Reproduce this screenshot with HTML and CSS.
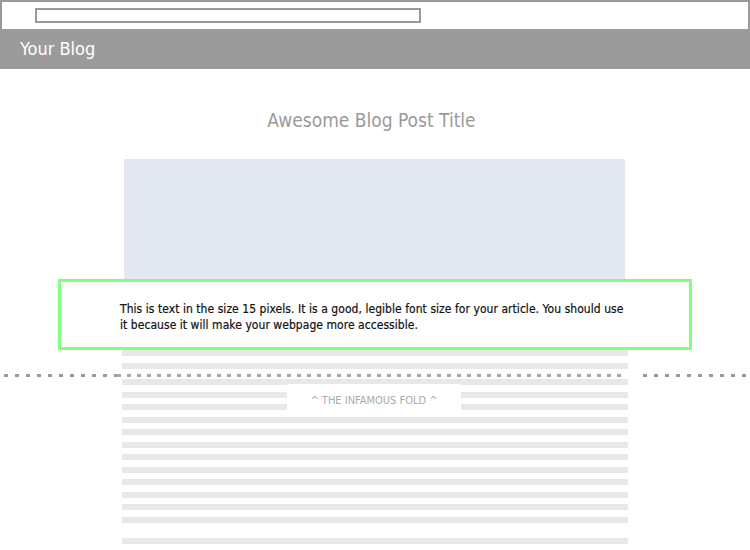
FILE: index.html
```html
<!DOCTYPE html>
<html>
<head>
<meta charset="utf-8">
<link rel="stylesheet" href="styles.css">
</head>
<body>
<div class="page">
  <div class="chrome"><div class="address"></div></div>
  <header class="site-header">Your Blog</header>
  <main class="post">
    <h1 class="post-title">Awesome Blog Post Title</h1>
    <div class="hero"></div>
    <div class="lines">
      <div class="line"></div>
      <div class="line"></div>
    </div>
    <div class="lines lines-b">
      <div class="line"></div><div class="line"></div><div class="line"></div><div class="line"></div>
      <div class="line"></div><div class="line"></div><div class="line"></div><div class="line"></div>
      <div class="line"></div><div class="line"></div><div class="line"></div><div class="line"></div>
    </div>
    <div class="lines lines-c">
      <div class="line"></div>
    </div>
  </main>
  <div class="sample">
    <p>This is text in the size 15 pixels. It is a good, legible font size for your article. You should use it because it will make your webpage more accessible.</p>
  </div>
  <div class="fold">
    <div class="dash dash-left"></div>
    <div class="dash dash-mid"></div>
    <div class="dash dash-right"></div>
  </div>
  <div class="fold-label">^ THE INFAMOUS FOLD ^</div>
</div>
</body>
</html>
```
FILE: styles.css
```css
* { box-sizing: border-box; }
html, body { margin: 0; padding: 0; background: #fff; }
body { font-family: "DejaVu Sans Condensed", "DejaVu Sans", sans-serif; }
.page { position: relative; width: 750px; height: 550px; overflow: hidden; }
.chrome {
  height: 29px;
  border: 2px solid #9a9a9a;
  border-bottom: 0;
  padding: 6px 0 0 33px;
}
.address { width: 386px; height: 15px; border: 2px solid #9a9a9a; }
.site-header {
  height: 40px;
  background: #9b9b9b;
  color: #fff;
  font-size: 18px;
  line-height: 40px;
  padding-left: 20px;
}
.post { padding-top: 37px; }
.post-title {
  margin: 0;
  text-align: center;
  font-weight: normal;
  font-size: 19px;
  line-height: 28px;
  color: #9a9a9a;
  padding-right: 7px;
}
.hero { margin: 25px 0 0 124px; width: 501px; height: 180px; background: #e3e7ef; }
.lines { margin-left: 122px; width: 506px; display: flex; flex-direction: column; }
.hero + .lines { margin-top: 11px; gap: 7px; }
.lines-b { margin-top: 10px; gap: 6.5px; }
.lines-c { margin-top: 15.5px; }
.line { height: 6px; background: #e8e8e8; flex: none; }
.sample {
  position: absolute;
  left: 58px; top: 279px;
  width: 634px; height: 71px;
  border: 3px solid #80ff80;
  background: #fff;
  padding: 19px 0 0 59px;
}
.sample p {
  margin: 0;
  font-size: 12px;
  line-height: 16px;
  color: #111;
  letter-spacing: 0.05px;
  width: 506px;
  -webkit-text-stroke: 0.2px #111;
}
.fold {
  position: absolute;
  left: 0; top: 374px;
  width: 750px; height: 3px;
  display: flex;
}
.dash { height: 3px; }
.dash-left {
  margin-left: 4px; width: 114px;
  background: repeating-linear-gradient(90deg, #999 0 4px, transparent 4px 11px);
}
.dash-mid {
  width: 507px;
  background: repeating-linear-gradient(90deg, #a8a8a8 0 4px, transparent 4px 10px);
}
.dash-right {
  margin-left: 21px; width: 108px;
  background: repeating-linear-gradient(90deg, #999 0 4px, transparent 4px 11px);
}
.fold-label {
  position: absolute;
  left: 287px; top: 384px;
  width: 174px; height: 33px;
  background: #fff;
  color: #aaa;
  font-size: 11px;
  line-height: 33px;
  text-align: center;
}
```
